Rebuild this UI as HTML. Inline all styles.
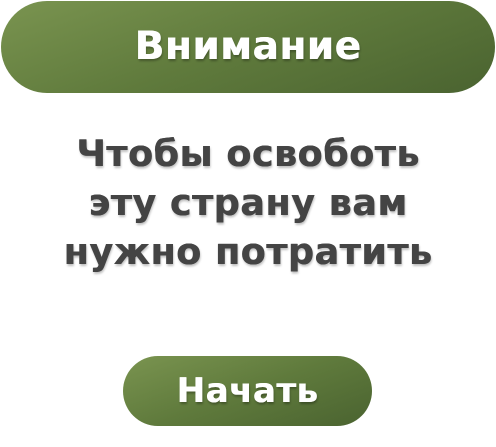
<!DOCTYPE html>
<html><head><meta charset="utf-8"><style>
html,body{margin:0;padding:0;background:#fff;width:496px;height:447px;overflow:hidden;position:relative}
.b{position:absolute;background:linear-gradient(160deg,#7a9450 0%,#5f7a3c 50%,#4a6330 100%);color:#fff;font-family:"DejaVu Sans",sans-serif;font-weight:bold;text-align:center;text-shadow:0.5px 0 0 #fff,1px 2px 2px rgba(0,0,0,.3)}
#t{left:1px;top:1px;width:494px;height:92px;border-radius:46px;font-size:39px;line-height:92px;letter-spacing:0.5px}
#s{left:123px;top:356px;width:249px;height:70px;border-radius:35px;font-size:34px;line-height:70px;letter-spacing:0.5px}
#m{position:absolute;left:0;width:496px;top:129px;text-align:center;font-family:"DejaVu Sans",sans-serif;font-weight:bold;font-size:36.5px;line-height:49px;color:#444;letter-spacing:0.5px;text-shadow:0.5px 0 0 #444,1px 2px 2px rgba(0,0,0,.25)}
</style></head><body>
<div class="b" id="t">Внимание</div>
<div id="m">Чтобы освоботь<br>эту страну вам<br>нужно потратить</div>
<div class="b" id="s">Начать</div>
</body></html>
